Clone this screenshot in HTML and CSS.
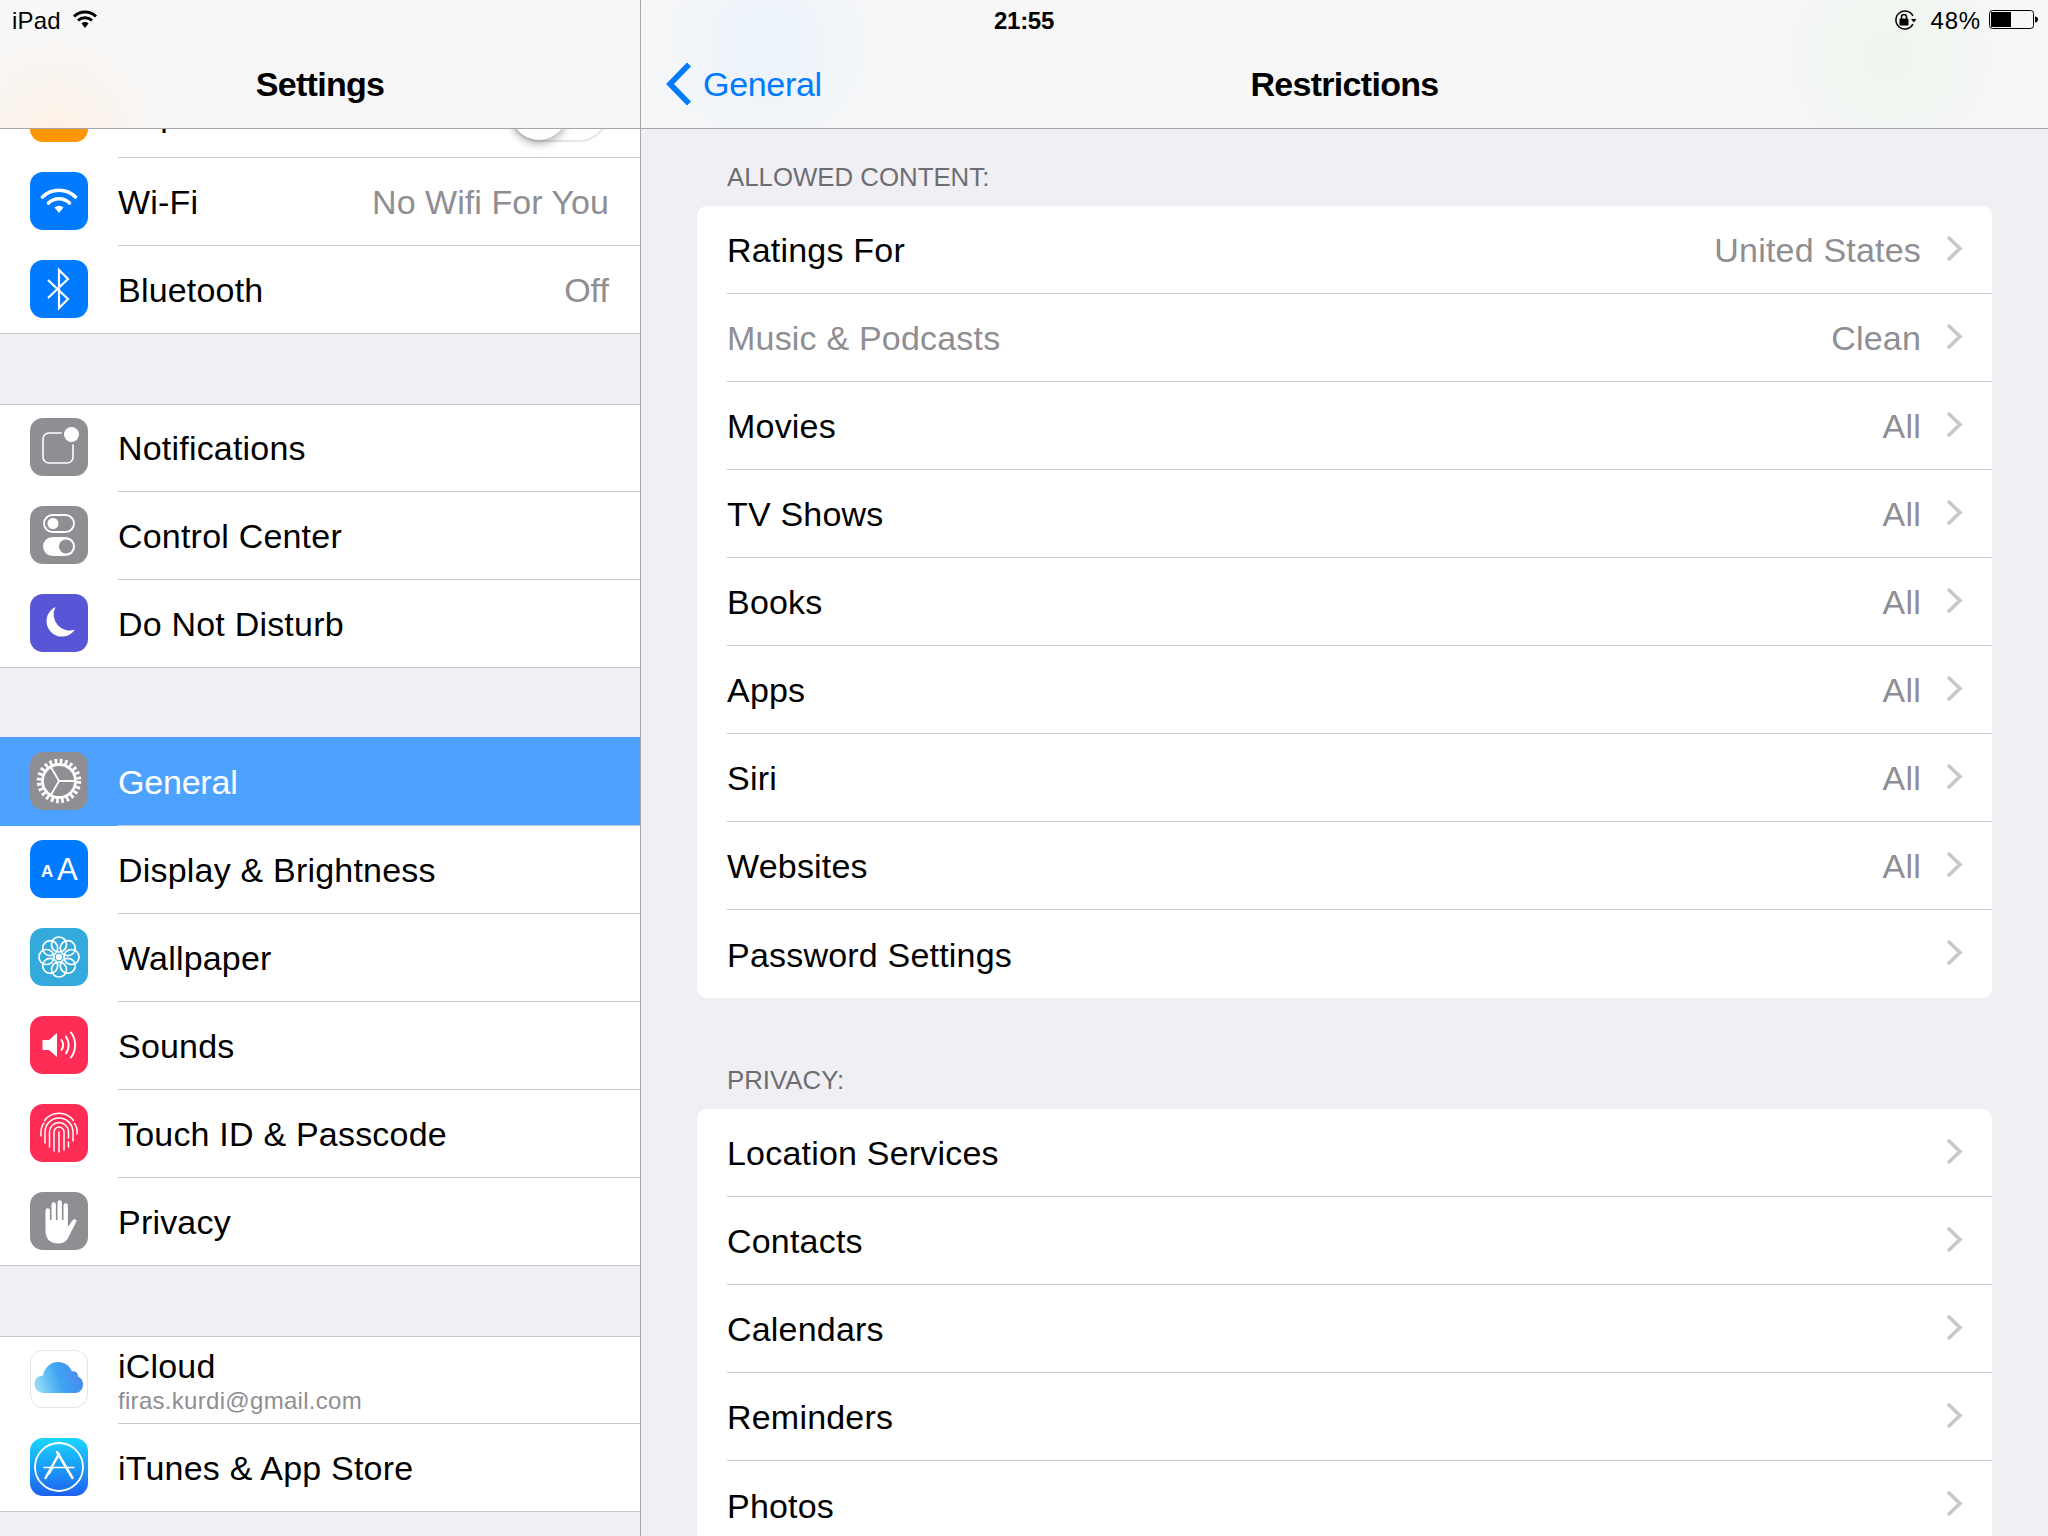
FILE: index.html
```html
<!DOCTYPE html>
<html lang="en">
<head>
    <meta charset="UTF-8">
    <title>Settings - Restrictions</title>
    <link rel="stylesheet" href="styles.css">
</head>
<body>
    <div class="status-bar">
        <div class="status-left">
            <span class="status-device">iPad</span>
            <svg class="status-wifi" width="26" height="20" viewBox="0 0 26 20"><path d="M2 7.500a16 16 0 0 1 22 0M6 11.500a10.500 10.500 0 0 1 14 0" fill="none" stroke="#000" stroke-width="3"/><path d="M9.500 14.500a5 5 0 0 1 7 0L13 19z" fill="#000"/></svg>
        </div>
        <div class="status-time">21:55</div>
        <div class="status-right">
            <svg class="status-lock" width="23" height="20" viewBox="0 0 23 20"><path d="M19 6A9 9 0 1 0 19 14" fill="none" stroke="#000" stroke-width="1.500"/><path d="M17 9h5.500l-2.750 3.500z" fill="#000"/><rect x="5.500" y="8.500" width="9" height="7" rx="1" fill="#000"/><path d="M7.500 9V7a2.500 2.500 0 0 1 5 0v2" fill="none" stroke="#000" stroke-width="1.500"/></svg>
            <span class="status-pct">48%</span>
            <svg class="status-battery" width="50" height="20" viewBox="0 0 50 20"><rect x="0.500" y="0.500" width="44" height="18" rx="3" fill="none" stroke="#000"/><rect x="2" y="2" width="20" height="15" fill="#000"/><path d="M46 6.500c2 0 3 1.500 3 3s-1 3-3 3z" fill="#000"/></svg>
        </div>
    </div>

    <div class="app">
        <aside class="sidebar">
            <header class="nav nav-side"><h1>Settings</h1></header>
            <div class="side-list">
                <div class="group group-first">
                    <div class="row">
                        <span class="icon bg-orange"></span>
                        <div class="row-main"><span>Airplane Mode</span><span class="switch"><span class="knob"></span></span></div>
                    </div>
                    <div class="row">
                        <span class="icon bg-blue">
                            <svg viewBox="0 0 58 58"><path d="M12.500 25a23.500 23.500 0 0 1 33 0M18.500 31a15 15 0 0 1 21 0" fill="none" stroke="#fff" stroke-width="3.600" stroke-linecap="round"/><path d="M24.500 35.500a7 7 0 0 1 9 0L29 41z" fill="#fff"/></svg>
                        </span>
                        <div class="row-main"><span>Wi-Fi</span><span class="value">No Wifi For You</span></div>
                    </div>
                    <div class="row">
                        <span class="icon bg-blue">
                            <svg viewBox="0 0 58 58"><path d="M18 20l20 19-9 9V10l9 9-20 19" fill="none" stroke="#fff" stroke-width="2.200"/></svg>
                        </span>
                        <div class="row-main"><span>Bluetooth</span><span class="value">Off</span></div>
                    </div>
                </div>

                <div class="group group-tight">
                    <div class="row">
                        <span class="icon bg-grey">
                            <svg viewBox="0 0 58 58"><rect x="13" y="15" width="30" height="30" rx="6" fill="none" stroke="#fff" stroke-width="1.600"/><circle cx="41.500" cy="16.500" r="10" fill="#8e8e93"/><circle cx="41.500" cy="16.500" r="7.500" fill="#fff"/></svg>
                        </span>
                        <div class="row-main"><span>Notifications</span></div>
                    </div>
                    <div class="row">
                        <span class="icon bg-grey">
                            <svg viewBox="0 0 58 58"><rect x="14" y="9" width="30" height="17" rx="8.500" fill="none" stroke="#fff" stroke-width="1.800"/><circle cx="23" cy="17.500" r="5.500" fill="#fff"/><rect x="13" y="31" width="32" height="19" rx="9.500" fill="#fff"/><circle cx="36" cy="40.500" r="7" fill="#8e8e93"/></svg>
                        </span>
                        <div class="row-main"><span>Control Center</span></div>
                    </div>
                    <div class="row">
                        <span class="icon bg-purple">
                            <svg viewBox="0 0 58 58"><path d="M25.500 13A15.500 15.500 0 1 0 45 35.500 16 16 0 0 1 25.500 13z" fill="#fff"/></svg>
                        </span>
                        <div class="row-main"><span>Do Not Disturb</span></div>
                    </div>
                </div>

                <div class="group">
                    <div class="row row-selected">
                        <span class="icon bg-grey">
                            <svg viewBox="0 0 58 58"><circle cx="29" cy="29" r="20" fill="none" stroke="#fff" stroke-width="4.500" stroke-dasharray="2.800 2.440"/><circle cx="29" cy="29" r="16.500" fill="none" stroke="#fff" stroke-width="2.800"/><path d="M29 29H45M29 29L21 15.200M29 29L21 42.800" fill="none" stroke="#fff" stroke-width="1.800"/></svg>
                        </span>
                        <div class="row-main"><span class="tight">General</span></div>
                    </div>
                    <div class="row">
                        <span class="icon bg-blue">
                            <svg viewBox="0 0 58 58"><text class="aa-small" x="11" y="37">A</text><text class="aa-big" x="27" y="40">A</text></svg>
                        </span>
                        <div class="row-main"><span>Display &amp; Brightness</span></div>
                    </div>
                    <div class="row">
                        <span class="icon bg-teal">
                            <svg viewBox="0 0 58 58">
                                <g fill="none" stroke="#fff" stroke-width="1.700">
                                    <circle cx="29" cy="16.500" r="7.500"/><circle cx="29" cy="41.500" r="7.500"/><circle cx="16.500" cy="29" r="7.500"/><circle cx="41.500" cy="29" r="7.500"/>
                                    <circle cx="20.200" cy="20.200" r="7.500"/><circle cx="37.800" cy="20.200" r="7.500"/><circle cx="20.200" cy="37.800" r="7.500"/><circle cx="37.800" cy="37.800" r="7.500"/>
                                </g>
                                <circle cx="29" cy="29" r="3.200" fill="#fff"/>
                            </svg>
                        </span>
                        <div class="row-main"><span>Wallpaper</span></div>
                    </div>
                    <div class="row">
                        <span class="icon bg-red">
                            <svg viewBox="0 0 58 58"><path d="M12.500 24H19L27 17V41L19 34H12.500z" fill="#fff"/><path d="M31.500 24a9 9 0 0 1 0 10M36 20.500a15 15 0 0 1 0 17M41 16.500a21 21 0 0 1 0 25" fill="none" stroke="#fff" stroke-width="2" stroke-linecap="round"/></svg>
                        </span>
                        <div class="row-main"><span>Sounds</span></div>
                    </div>
                    <div class="row">
                        <span class="icon bg-red">
                            <svg viewBox="0 0 58 58"><g fill="none" stroke="#fff" stroke-width="1.500" stroke-linecap="round"><path d="M14.500 16.500A18 18 0 0 1 43.500 16.500"/><path d="M11 32C10.500 26 11.500 22 14 19M47 30C47.500 26 46.500 22 44.500 19.500"/><path d="M15 39V28A14 14 0 0 1 43 28V37"/><path d="M19.500 43V28A9.500 9.500 0 0 1 38.500 28V34M38.500 38V43"/><path d="M24 47V28A5 5 0 0 1 34 28V46"/><path d="M29 28V48"/></g></svg>
                        </span>
                        <div class="row-main"><span>Touch ID &amp; Passcode</span></div>
                    </div>
                    <div class="row">
                        <span class="icon bg-grey">
                            <svg viewBox="0 0 58 58"><path d="M15.500 18.500a2.200 2.200 0 0 1 4.400 0V28h1.600V12.500a2.200 2.200 0 0 1 4.400 0V28h1.600V10.500a2.200 2.200 0 0 1 4.400 0V28h1.600V13.500a2.200 2.200 0 0 1 4.400 0V35l4.500-6.500c2-2.500 5-1 4 1L39 44c-2 5-5.500 7.500-11 7.500-8 0-12.500-5-12.500-12z" fill="#fff"/></svg>
                        </span>
                        <div class="row-main"><span>Privacy</span></div>
                    </div>
                </div>

                <div class="group">
                    <div class="row">
                        <span class="icon icon-cloud">
                            <svg viewBox="0 0 58 58">
                                <defs><linearGradient id="cloudGrad" x1="0" y1="0.600" x2="1" y2="0.400"><stop offset="0" stop-color="#94dcf6"/><stop offset="0.500" stop-color="#3ea5f2"/><stop offset="1" stop-color="#4a86ee"/></linearGradient></defs>
                                <path d="M14 43C8.500 43 4.500 39 4.500 34C4.500 29 8.500 25.500 13 25.500C14.500 17.500 20.500 12 28 12C34.500 12 39.500 15.500 42 21.500C43 21 44 21 45 21.500C47.500 22.500 48 24.500 48 26.500C51.500 28 53 31 53 34.500C53 39.500 49.500 43 45 43z" fill="url(#cloudGrad)"/>
                            </svg>
                        </span>
                        <div class="row-main"><div class="two-line"><span>iCloud</span><span class="sub">firas.kurdi@gmail.com</span></div></div>
                    </div>
                    <div class="row">
                        <span class="icon icon-store">
                            <svg viewBox="0 0 58 58"><circle cx="29" cy="29" r="24" fill="none" stroke="#fff" stroke-width="1.800"/><g fill="none" stroke="#fff" stroke-linecap="round"><path d="M14 29.500H44" stroke-width="1.500"/><path d="M29 16L15.500 40" stroke-width="2.500"/><path d="M27 14L42.500 40" stroke-width="2.500"/><path d="M23 29.500L19 36" stroke-width="1.500"/></g></svg>
                        </span>
                        <div class="row-main"><span>iTunes &amp; App Store</span></div>
                    </div>
                </div>
            </div>
        </aside>

        <main class="detail">
            <header class="nav nav-main">
                <a class="back" href="#">
                    <svg width="26" height="44" viewBox="0 0 26 44"><path d="M23 2.500L4 22l19 19.500" fill="none" stroke="#007aff" stroke-width="5.600"/></svg>
                    <span class="back-text">General</span>
                </a>
                <h1>Restrictions</h1>
            </header>
            <div class="detail-list">
                <h2 class="section-label">ALLOWED CONTENT:</h2>
                <section class="card">
                    <div class="card-row"><div class="card-main"><span>Ratings For</span><span class="value">United States</span><svg class="chevron" viewBox="0 0 17 27"><path d="M2 2l12 11.500L2 25"/></svg></div></div>
                    <div class="card-row"><div class="card-main"><span class="muted">Music &amp; Podcasts</span><span class="value">Clean</span><svg class="chevron" viewBox="0 0 17 27"><path d="M2 2l12 11.500L2 25"/></svg></div></div>
                    <div class="card-row"><div class="card-main"><span>Movies</span><span class="value">All</span><svg class="chevron" viewBox="0 0 17 27"><path d="M2 2l12 11.500L2 25"/></svg></div></div>
                    <div class="card-row"><div class="card-main"><span>TV Shows</span><span class="value">All</span><svg class="chevron" viewBox="0 0 17 27"><path d="M2 2l12 11.500L2 25"/></svg></div></div>
                    <div class="card-row"><div class="card-main"><span>Books</span><span class="value">All</span><svg class="chevron" viewBox="0 0 17 27"><path d="M2 2l12 11.500L2 25"/></svg></div></div>
                    <div class="card-row"><div class="card-main"><span>Apps</span><span class="value">All</span><svg class="chevron" viewBox="0 0 17 27"><path d="M2 2l12 11.500L2 25"/></svg></div></div>
                    <div class="card-row"><div class="card-main"><span>Siri</span><span class="value">All</span><svg class="chevron" viewBox="0 0 17 27"><path d="M2 2l12 11.500L2 25"/></svg></div></div>
                    <div class="card-row"><div class="card-main"><span>Websites</span><span class="value">All</span><svg class="chevron" viewBox="0 0 17 27"><path d="M2 2l12 11.500L2 25"/></svg></div></div>
                    <div class="card-row"><div class="card-main"><span>Password Settings</span><svg class="chevron" viewBox="0 0 17 27"><path d="M2 2l12 11.500L2 25"/></svg></div></div>
                </section>

                <h2 class="section-label label-privacy">PRIVACY:</h2>
                <section class="card">
                    <div class="card-row"><div class="card-main"><span>Location Services</span><svg class="chevron" viewBox="0 0 17 27"><path d="M2 2l12 11.500L2 25"/></svg></div></div>
                    <div class="card-row"><div class="card-main"><span>Contacts</span><svg class="chevron" viewBox="0 0 17 27"><path d="M2 2l12 11.500L2 25"/></svg></div></div>
                    <div class="card-row"><div class="card-main"><span>Calendars</span><svg class="chevron" viewBox="0 0 17 27"><path d="M2 2l12 11.500L2 25"/></svg></div></div>
                    <div class="card-row"><div class="card-main"><span>Reminders</span><svg class="chevron" viewBox="0 0 17 27"><path d="M2 2l12 11.500L2 25"/></svg></div></div>
                    <div class="card-row"><div class="card-main"><span>Photos</span><svg class="chevron" viewBox="0 0 17 27"><path d="M2 2l12 11.500L2 25"/></svg></div></div>
                </section>
            </div>
        </main>
    </div>
</body>
</html>
```

FILE: styles.css
```css
* {
    box-sizing: border-box;
}
html, body {
    margin: 0;
    height: 100%;
}
body {
    position: relative;
    width: 2048px;
    height: 1536px;
    overflow: hidden;
    font-family: "Liberation Sans", Arial, sans-serif;
    font-size: 34px;
    letter-spacing: 0.2px;
    color: #000;
    background: #efeff4;
}

/* status bar lies over both nav bars */
.status-bar {
    position: absolute;
    top: 0;
    left: 0;
    right: 0;
    z-index: 2;
    height: 42px;
    display: grid;
    grid-template-columns: 1fr auto 1fr;
    align-items: center;
    padding: 0 9px;
    font-size: 24px;
}
.status-left {
    display: flex;
    align-items: center;
    gap: 11px;
}
.status-device {
    margin-left: 3px;
}
.status-wifi {
    margin-top: -4px;
}
.status-time {
    font-weight: bold;
    letter-spacing: -0.3px;
}
.status-right {
    display: flex;
    align-items: center;
    justify-content: flex-end;
    gap: 12px;
}
.status-right svg {
    margin-top: -2px;
}
.status-lock {
    margin-right: 2px;
}
.status-pct {
    letter-spacing: 0.8px;
}
.status-battery {
    margin-left: -4px;
}

.app {
    display: flex;
    height: 100%;
}
.sidebar {
    width: 641px;
    flex: none;
    display: flex;
    flex-direction: column;
    border-right: 1px solid #a6a6ab;
}
.detail {
    flex: 1;
    min-width: 0;
    display: flex;
    flex-direction: column;
}

.nav {
    height: 129px;
    flex: none;
    border-bottom: 1px solid #a6a6ab;
    background-color: #f7f7f7;
    position: relative;
    z-index: 1;
}
.nav h1 {
    margin: 0;
    font-size: 34px;
    font-weight: bold;
    letter-spacing: -0.7px;
}
.nav-side {
    display: flex;
    align-items: center;
    justify-content: center;
    padding-top: 40px;
    background-image: radial-gradient(circle 110px at 55px 135px, #fdf1e6, rgba(247,247,247,0));
}
.nav-main {
    display: flex;
    align-items: center;
    justify-content: center;
    padding-top: 40px;
    background-image:
        radial-gradient(circle 130px at 126px 45px, #ebf3fc, rgba(247,247,247,0)),
        radial-gradient(circle 130px at 1249px 55px, #eef6ee, rgba(247,247,247,0));
}
.back {
    position: absolute;
    left: 25px;
    top: 62px;
    display: flex;
    align-items: center;
    gap: 11px;
    color: #007aff;
    text-decoration: none;
}
.back-text {
    letter-spacing: -0.3px;
}
.tight {
    letter-spacing: -0.2px;
}

/* sidebar list */
.side-list {
    flex: 1;
    overflow: hidden;
}
.group {
    background: #fff;
    box-shadow: inset 0 1px #c8c7cc, inset 0 -1px #c8c7cc;
    margin-bottom: 70px;
}
.group-first {
    box-shadow: inset 0 -1px #c8c7cc;
    margin-top: -59px;
}
.group-tight {
    margin-bottom: 69px;
}
.group > .row:last-child .row-main {
    border-bottom: none;
}
.row {
    display: flex;
    height: 88px;
    padding-left: 30px;
}
.icon {
    width: 58px;
    height: 58px;
    flex: none;
    margin: 14px 30px 0 0;
    border-radius: 13px;
    overflow: hidden;
}
.icon svg {
    display: block;
    width: 58px;
    height: 58px;
}
.bg-orange { background: #ff9500; }
.bg-blue { background: #007aff; }
.bg-grey { background: #8e8e93; }
.bg-purple { background: #5856d6; }
.bg-teal { background: #34aadc; }
.bg-red { background: #ff2d55; }
.icon-cloud {
    background: #fff;
    border: 1px solid #e5e5ea;
}
.icon-cloud svg {
    margin: -1px;
}
.icon-store {
    background: linear-gradient(#1ad6fd, #1d62f0);
}
.aa-small {
    font-size: 17px;
    font-weight: bold;
    fill: #fff;
}
.aa-big {
    font-size: 31px;
    fill: #fff;
}
.row-main {
    flex: 1;
    min-width: 0;
    display: flex;
    align-items: center;
    justify-content: space-between;
    padding: 1px 31px 0 0;
    border-bottom: 1px solid #c8c7cc;
}
.row-selected {
    height: 89px;
    background: #4da2ff;
    color: #fff;
}
.row-selected .icon {
    margin-top: 15px;
}
.row-selected .row-main {
    padding-top: 3px;
}
.value {
    color: #8e8e93;
}
.side-list .value {
    letter-spacing: 0.05px;
}
.two-line {
    display: flex;
    flex-direction: column;
    line-height: 39px;
    margin-top: 2px;
}
.sub {
    font-size: 24px;
    line-height: 30px;
    color: #8e8e93;
    letter-spacing: 0.3px;
}
.switch {
    position: relative;
    width: 100px;
    height: 60px;
    margin-top: -4px;
    border: 2px solid #e5e5ea;
    border-radius: 30px;
}
.knob {
    position: absolute;
    left: 0;
    top: 0;
    width: 56px;
    height: 56px;
    border-radius: 50%;
    background: #fff;
    box-shadow: 0 4px 8px rgba(0,0,0,0.3);
}

/* detail list */
.detail-list {
    flex: 1;
    overflow: hidden;
    padding: 0 56px;
}
.section-label {
    margin: 0;
    padding: 33px 0 0 30px;
    height: 77px;
    font-size: 25.800px;
    line-height: 30px;
    font-weight: normal;
    letter-spacing: 0;
    color: #6d6d72;
}
.label-privacy {
    height: 111px;
    padding-top: 67px;
}
.card {
    background: #fff;
    border-radius: 10px;
    padding-left: 30px;
}
.card-row {
    height: 88px;
}
.card-main {
    display: flex;
    align-items: center;
    height: 100%;
    padding: 2px 29px 0 0;
    border-bottom: 1px solid #c8c7cc;
}
.card-main > span:first-child {
    flex: 1;
}
.card-row:last-child .card-main {
    border-bottom: none;
}
.card-main .value {
    margin-right: 25px;
}
.muted {
    color: #8e8e93;
}
.chevron {
    width: 17px;
    height: 27px;
    flex: none;
    margin-top: -5px;
    fill: none;
    stroke: #c7c7cc;
    stroke-width: 3.600;
}
```
